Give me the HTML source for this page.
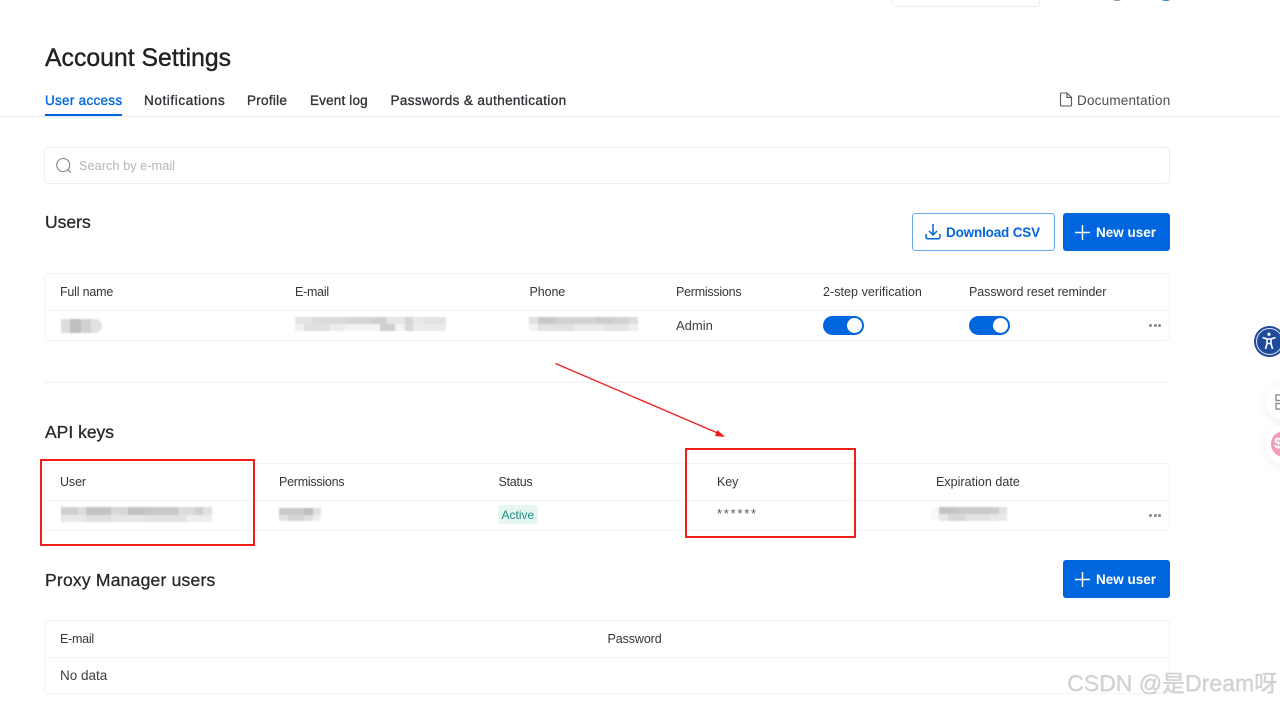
<!DOCTYPE html>
<html><head><meta charset="utf-8"><style>
html,body{margin:0;padding:0;background:#fff;width:1280px;height:705px;overflow:hidden}
body{position:relative;font-family:"Liberation Sans","Noto Sans CJK SC",sans-serif;color:#26282b;filter:blur(.3px)}
.t{position:absolute;white-space:nowrap;line-height:16px}
.b{position:absolute;box-sizing:border-box}
.th{font-size:12.5px;color:#33363a}
.tab{font-size:13.5px;color:#2f3236;top:92.5px;letter-spacing:.28px;-webkit-text-stroke:.35px #2f3236}
.h2{font-size:17.5px;color:#26282b;-webkit-text-stroke:.3px #26282b}
.card{position:absolute;left:44px;width:1126px;border:1px solid #f2f3f4;border-radius:4px;box-sizing:border-box}
.line{position:absolute;height:1px;background:#f2f3f4}
.btn{position:absolute;left:1063px;width:107px;height:38px;background:#0066dd;border-radius:3px}
.sw{position:absolute;width:41px;height:19px;background:#0066dd;border-radius:10px}
.sw i{position:absolute;right:2px;top:2px;width:15px;height:15px;background:#fff;border-radius:50%}
.m{position:absolute}
.mz{filter:blur(.7px)}
.m div{height:50%}
.dots{position:absolute;width:12px;height:3px}
.dots i{position:absolute;top:0;width:3px;height:3px;border-radius:50%;background:#85898e}
.red{position:absolute;box-sizing:border-box;border:2px solid #f01d1d}
</style></head><body>

<div class="b" style="left:891px;top:-10px;width:149px;height:17px;border:1px solid #eceef0;border-radius:3px"></div>
<div class="b" style="left:1110px;top:-8px;width:14px;height:9px;border-radius:50%;background:#8a8d90"></div>
<div class="b" style="left:1159px;top:-8px;width:14px;height:9px;border-radius:50%;background:#0a7de0"></div>

<div class="t" style="left:45px;top:44.5px;font-size:24.8px;line-height:27px;color:#202225;-webkit-text-stroke:.4px #202225">Account Settings</div>

<div class="t tab" style="left:45px;color:#0066dd;-webkit-text-stroke:.35px #0066dd">User access</div>
<div class="b" style="left:45px;top:114px;width:77px;height:2px;background:#0066dd"></div>
<div class="t tab" style="left:144px;letter-spacing:.6px">Notifications</div>
<div class="t tab" style="left:247px">Profile</div>
<div class="t tab" style="left:310px;letter-spacing:.17px">Event log</div>
<div class="t tab" style="left:390.5px;letter-spacing:.36px">Passwords &amp; authentication</div>

<svg class="m" style="left:1059px;top:92px" width="14" height="15" viewBox="0 0 14 15" fill="none" stroke="#55585c" stroke-width="1.1"><path d="M1.5 1.9a.9.9 0 0 1 .9-.9H8l4.5 4.4v7.7a.9.9 0 0 1-.9.9H2.4a.9.9 0 0 1-.9-.9zM8 1v4.4h4.5"/></svg>
<div class="t" style="left:1077px;top:92.5px;font-size:13.5px;color:#4a4d51;letter-spacing:.2px">Documentation</div>
<div class="line" style="left:0;top:116px;width:1280px;background:#e9edf0"></div>

<div class="b" style="left:44px;top:147px;width:1126px;height:37px;border:1px solid #eceef0;border-radius:4px"></div>
<svg class="m" style="left:55px;top:157px" width="18" height="18" viewBox="0 0 18 18" fill="none" stroke="#7f858b" stroke-width="1.1"><circle cx="8.2" cy="8" r="6.5"/><path d="M12.8 12.7l3 3"/></svg>
<div class="t" style="left:79px;top:158px;font-size:12.8px;color:#b2b7bd">Search by e-mail</div>

<div class="t h2" style="left:45px;top:213px;line-height:18px">Users</div>

<div class="b" style="left:912px;top:213px;width:143px;height:38px;border:1px solid #6aa8ee;border-radius:3px"></div>
<svg class="m" style="left:924px;top:223px" width="18" height="18" viewBox="0 0 18 18" fill="none" stroke="#0066dd" stroke-width="1.5"><path d="M9 1v10.5M5 8l4 4 4-4M2 11v3.2a1.6 1.6 0 0 0 1.6 1.6h10.8a1.6 1.6 0 0 0 1.6-1.6V11"/></svg>
<div class="t" style="left:946px;top:225px;font-size:13.5px;font-weight:700;color:#0066dd;letter-spacing:-.17px">Download CSV</div>

<div class="btn" style="top:213px"></div>
<svg class="m" style="left:1075px;top:225px" width="15" height="15" viewBox="0 0 15 15" stroke="#fff" stroke-width="1.4"><path d="M7.5 0v15M0 7.5h15"/></svg>
<div class="t" style="left:1096px;top:225px;font-size:13.5px;font-weight:700;color:#fff">New user</div>

<div class="card" style="top:273px;height:68px"></div>
<div class="line" style="left:45px;top:310px;width:1124px"></div>
<div class="t th" style="left:60px;top:284px;letter-spacing:-.2px">Full name</div>
<div class="t th" style="left:295px;top:284px;letter-spacing:-.25px">E-mail</div>
<div class="t th" style="left:529.5px;top:284px;letter-spacing:-.1px">Phone</div>
<div class="t th" style="left:676px;top:284px;letter-spacing:-.25px">Permissions</div>
<div class="t th" style="left:823px;top:284px;letter-spacing:.05px">2-step verification</div>
<div class="t th" style="left:969px;top:284px;letter-spacing:-.07px">Password reset reminder</div>

<div class="m mz" style="left:61px;top:319px;width:41px;height:14px;border-radius:0 7px 7px 0;background:linear-gradient(90deg,#dcdcdc 0 9px,#bfbfbf 9px 20px,#d2d2d2 20px 30px,#e2e2e2 30px)"></div>

<div class="m mz" style="left:295px;top:317px;width:151px;height:14px">
<div style="background:linear-gradient(90deg,#e4e4e4 0 17px,#dadada 17px 50px,#d6d6d6 50px 75px,#d0d0d0 75px 92px,#e6e6e6 92px 110px,#d6d6d6 110px 118px,#e8e8e8 118px 130px,#e2e2e2 130px 151px)"></div>
<div style="background:linear-gradient(90deg,#efefef 0 9px,#e0e0e0 9px 35px,#ececec 35px 50px,#f3f3f3 50px 85px,#cfcfcf 85px 100px,#f3f3f3 100px 110px,#d9d9d9 110px 118px,#ebebeb 118px)"></div>
</div>

<div class="m mz" style="left:529px;top:317px;width:109px;height:14px">
<div style="background:linear-gradient(90deg,#e0e0e0 0 9px,#c9c9c9 9px 27px,#d2d2d2 27px 67px,#cdcdcd 67px 84px,#d2d2d2 84px 100px,#dcdcdc 100px)"></div>
<div style="background:linear-gradient(90deg,#f2f2f2 0 9px,#e2e2e2 9px 45px,#ebebeb 45px 75px,#e4e4e4 75px 100px,#eeeeee 100px)"></div>
</div>

<div class="t" style="left:676px;top:317.5px;font-size:13px;color:#3d4044">Admin</div>
<div class="sw" style="left:823px;top:316px"><i></i></div>
<div class="sw" style="left:969px;top:316px"><i></i></div>
<div class="dots" style="left:1149px;top:324px"><i style="left:0"></i><i style="left:4.5px"></i><i style="left:9px"></i></div>

<div class="line" style="left:45px;top:382px;width:1125px;background:#eff0f2"></div>

<div class="t h2" style="left:45px;top:423px;line-height:18px">API keys</div>

<div class="card" style="top:463px;height:68px"></div>
<div class="line" style="left:45px;top:500px;width:1124px"></div>
<div class="t th" style="left:60px;top:474px;letter-spacing:-.1px">User</div>
<div class="t th" style="left:279px;top:474px;letter-spacing:-.25px">Permissions</div>
<div class="t th" style="left:498.5px;top:474px;letter-spacing:-.25px">Status</div>
<div class="t th" style="left:717px;top:474px;letter-spacing:-.1px">Key</div>
<div class="t th" style="left:936px;top:474px;letter-spacing:.03px">Expiration date</div>

<div class="m mz" style="left:61px;top:507px;width:151px;height:15px">
<div style="background:linear-gradient(90deg,#cfcfcf 0 17px,#dcdcdc 17px 25px,#c4c4c4 25px 50px,#d8d8d8 50px 67px,#c2c2c2 67px 84px,#c8c8c8 84px 117px,#dcdcdc 117px 134px,#cfcfcf 134px 142px,#e0e0e0 142px)"></div>
<div style="background:linear-gradient(90deg,#e8e8e8 0 25px,#dfdfdf 25px 50px,#e6e6e6 50px 84px,#e2e2e2 84px 125px,#eeeeee 125px)"></div>
</div>

<div class="m mz" style="left:279px;top:508px;width:42px;height:13px">
<div style="background:linear-gradient(90deg,#c9c9c9 0 25px,#bdbdbd 25px 34px,#e0e0e0 34px)"></div>
<div style="background:linear-gradient(90deg,#e2e2e2 0 9px,#d6d6d6 9px 25px,#dedede 25px 34px,#efefef 34px)"></div>
</div>

<div class="b" style="left:498px;top:505px;width:40px;height:19px;background:#e6f6f2;border-radius:3px"></div>
<div class="t" style="left:501.5px;top:507px;font-size:12px;color:#1f8f7d">Active</div>

<div class="t" style="left:717px;top:506px;font-size:13px;color:#55585c;letter-spacing:1.75px">******</div>

<div class="m mz" style="left:931px;top:507px;width:76px;height:14px">
<div style="background:linear-gradient(90deg,#f8f8f8 0 8px,#c4c4c4 8px 24px,#c9c9c9 24px 60px,#cdcdcd 60px 68px,#e2e2e2 68px)"></div>
<div style="background:linear-gradient(90deg,#fafafa 0 8px,#e8e8e8 8px 17px,#d8d8d8 17px 34px,#e2e2e2 34px 60px,#e8e8e8 60px)"></div>
</div>

<div class="dots" style="left:1149px;top:514px"><i style="left:0"></i><i style="left:4.5px"></i><i style="left:9px"></i></div>

<div class="t h2" style="left:45px;top:571px;line-height:18px;letter-spacing:.22px">Proxy Manager users</div>
<div class="btn" style="top:560px"></div>
<svg class="m" style="left:1075px;top:572px" width="15" height="15" viewBox="0 0 15 15" stroke="#fff" stroke-width="1.4"><path d="M7.5 0v15M0 7.5h15"/></svg>
<div class="t" style="left:1096px;top:572px;font-size:13.5px;font-weight:700;color:#fff">New user</div>

<div class="card" style="top:620px;height:74px"></div>
<div class="line" style="left:45px;top:657px;width:1124px"></div>
<div class="t th" style="left:60px;top:631px;letter-spacing:-.25px">E-mail</div>
<div class="t th" style="left:607.5px;top:631px;letter-spacing:-.1px">Password</div>
<div class="t" style="left:60px;top:668px;font-size:13.5px;color:#3d4044">No data</div>

<div class="red" style="left:40px;top:459px;width:215px;height:87px"></div>
<div class="red" style="left:685px;top:448px;width:171px;height:90px"></div>
<svg class="m" style="left:550px;top:358px" width="185" height="85" viewBox="0 0 185 85"><path d="M5.5 5.5L170 76" stroke="#f01d1d" stroke-width="1.3" fill="none"/><path d="M175 79l-10-1 2.5-6z" fill="#f01d1d"/></svg>

<div class="b" style="left:1254px;top:326px;width:31px;height:31px;border-radius:50%;background:#1e4a9a"></div>
<div class="b" style="left:1256px;top:328px;width:27px;height:27px;border-radius:50%;border:1px solid #dfe7f5"></div>
<svg class="m" style="left:1260px;top:331px" width="18" height="21" viewBox="0 0 18 21" fill="#fff" stroke="#fff"><circle cx="9" cy="3.2" r="1.6" stroke="none"/><path d="M2.5 6.5L7 8v4.5L5.5 18M15.5 6.5L11 8v4.5l1.5 5.5M7 8h4M7 12.5h4" fill="none" stroke-width="1.6"/></svg>

<div class="b" style="left:1266px;top:383px;width:40px;height:38px;border-radius:50%;background:#fff;box-shadow:0 2px 10px rgba(0,0,0,.07)"></div>
<svg class="m" style="left:1275px;top:394px" width="6" height="16" viewBox="0 0 6 16" fill="none" stroke="#8d8d8d" stroke-width="1.4"><rect x="1" y="1" width="8" height="5.5"/><rect x="1" y="9.5" width="8" height="5.5"/></svg>

<div class="b" style="left:1265px;top:424px;width:40px;height:40px;border-radius:50%;background:#fff;box-shadow:0 2px 10px rgba(0,0,0,.07)"></div>
<div class="b" style="left:1271px;top:431px;width:26px;height:26px;border-radius:50%;background:#f19db5"></div>
<div class="t" style="left:1274px;top:436px;font-size:15px;font-weight:700;color:#fff">$</div>

<div class="t" style="left:1067px;top:670px;font-size:23px;line-height:27px;color:#d2d2d2;text-shadow:.5px .5px .5px rgba(120,120,120,.3)">CSDN @是Dream呀</div>

</body></html>
